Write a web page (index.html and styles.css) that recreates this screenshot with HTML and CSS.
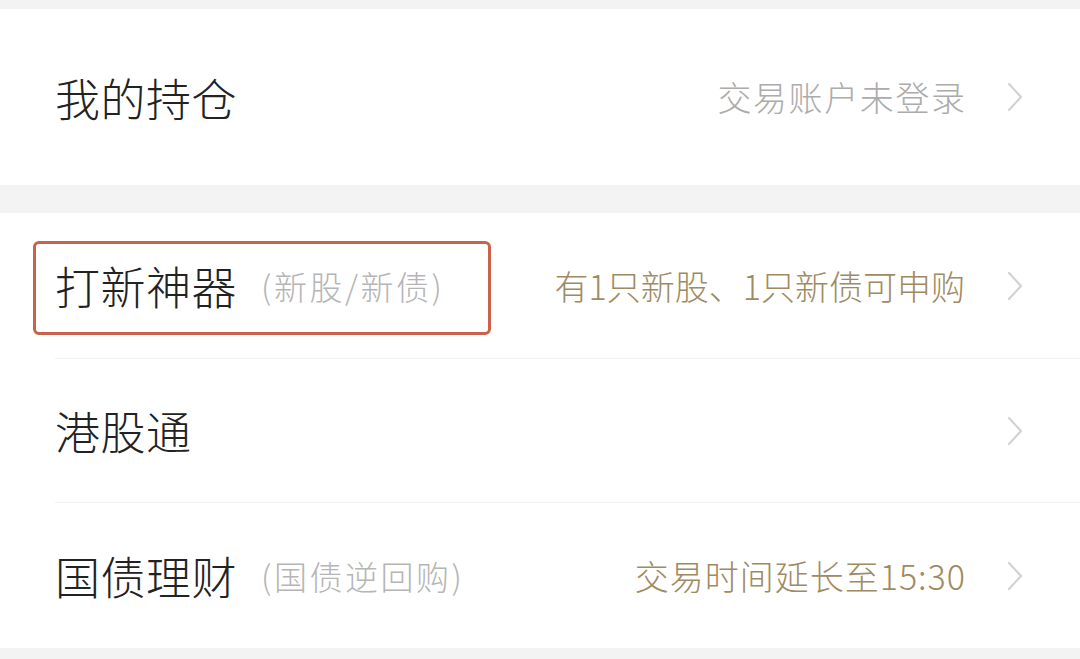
FILE: index.html
```html
<!DOCTYPE html>
<html lang="zh-CN">
<head>
<meta charset="utf-8">
<title>我的持仓</title>
<link rel="stylesheet" href="styles.css">
</head>
<body>
<div class="page">
  <section class="group">
    <div class="row row-tall">
      <span class="title">我的持仓</span>
      <span class="info info-gray spaced">交易账户未登录</span>
      <svg class="chev" viewBox="0 0 16 30" width="16" height="30"><polyline points="2,2 14,15 2,28"/></svg>
    </div>
  </section>
  <section class="group">
    <div class="row row-a">
      <span class="title">打新神器</span>
      <span class="sub">(新股/新债)</span>
      <span class="info info-gold">有1只新股、1只新债可申购</span>
      <svg class="chev" viewBox="0 0 16 30" width="16" height="30"><polyline points="2,2 14,15 2,28"/></svg>
      <div class="mark"></div>
    </div>
    <div class="row row-b">
      <span class="title">港股通</span>
      <span class="info"></span>
      <svg class="chev" viewBox="0 0 16 30" width="16" height="30"><polyline points="2,2 14,15 2,28"/></svg>
    </div>
    <div class="row row-c">
      <span class="title">国债理财</span>
      <span class="sub">(国债逆回购)</span>
      <span class="info info-gold spaced-sm">交易时间延长至15:30</span>
      <svg class="chev" viewBox="0 0 16 30" width="16" height="30"><polyline points="2,2 14,15 2,28"/></svg>
    </div>
  </section>
</div>
</body>
</html>
```
FILE: styles.css
```css
html, body {
  margin: 0;
  padding: 0;
}
body {
  background: #f3f3f3;
  font-family: "Noto Sans CJK SC", "Noto Sans", sans-serif;
  width: 1080px;
  height: 659px;
  overflow: hidden;
}
.page {
  padding-top: 9px;
}
.group {
  background: #ffffff;
}
.group + .group {
  margin-top: 28px;
}
.row {
  position: relative;
  display: flex;
  align-items: center;
  margin-left: 55px;
  padding-right: 57px;
  box-sizing: border-box;
}
.row + .row {
  border-top: 1px solid #efefef;
}
.row-tall { height: 176px; }
.row-a { height: 145px; }
.row-b { height: 144px; }
.row-c { height: 146px; }
.title {
  font-size: 45px;
  font-weight: 300;
  color: #222222;
  line-height: 1;
  letter-spacing: 0.5px;
}
.sub {
  font-size: 33px;
  font-weight: 300;
  color: #b5b5b5;
  margin-left: 24px;
  line-height: 1;
  padding-top: 2px;
  letter-spacing: 2.5px;
}
.info {
  margin-left: auto;
  font-size: 34px;
  font-weight: 300;
  line-height: 1;
}
.spaced {
  letter-spacing: 1.6px;
  margin-right: -1.6px;
}
.spaced-sm {
  letter-spacing: 1px;
  margin-right: -1px;
}
.info-gray { color: #acacac; }
.info-gold { color: #a08a62; }
.chev {
  margin-left: 42px;
  flex: none;
}
.chev polyline {
  fill: none;
  stroke: #d2d2d2;
  stroke-width: 2.2;
  stroke-linecap: round;
  stroke-linejoin: round;
}
.mark {
  position: absolute;
  left: -22px;
  top: 28px;
  width: 458px;
  height: 94px;
  box-sizing: border-box;
  border: 3px solid #c9614b;
  border-radius: 6px;
  pointer-events: none;
}
```
